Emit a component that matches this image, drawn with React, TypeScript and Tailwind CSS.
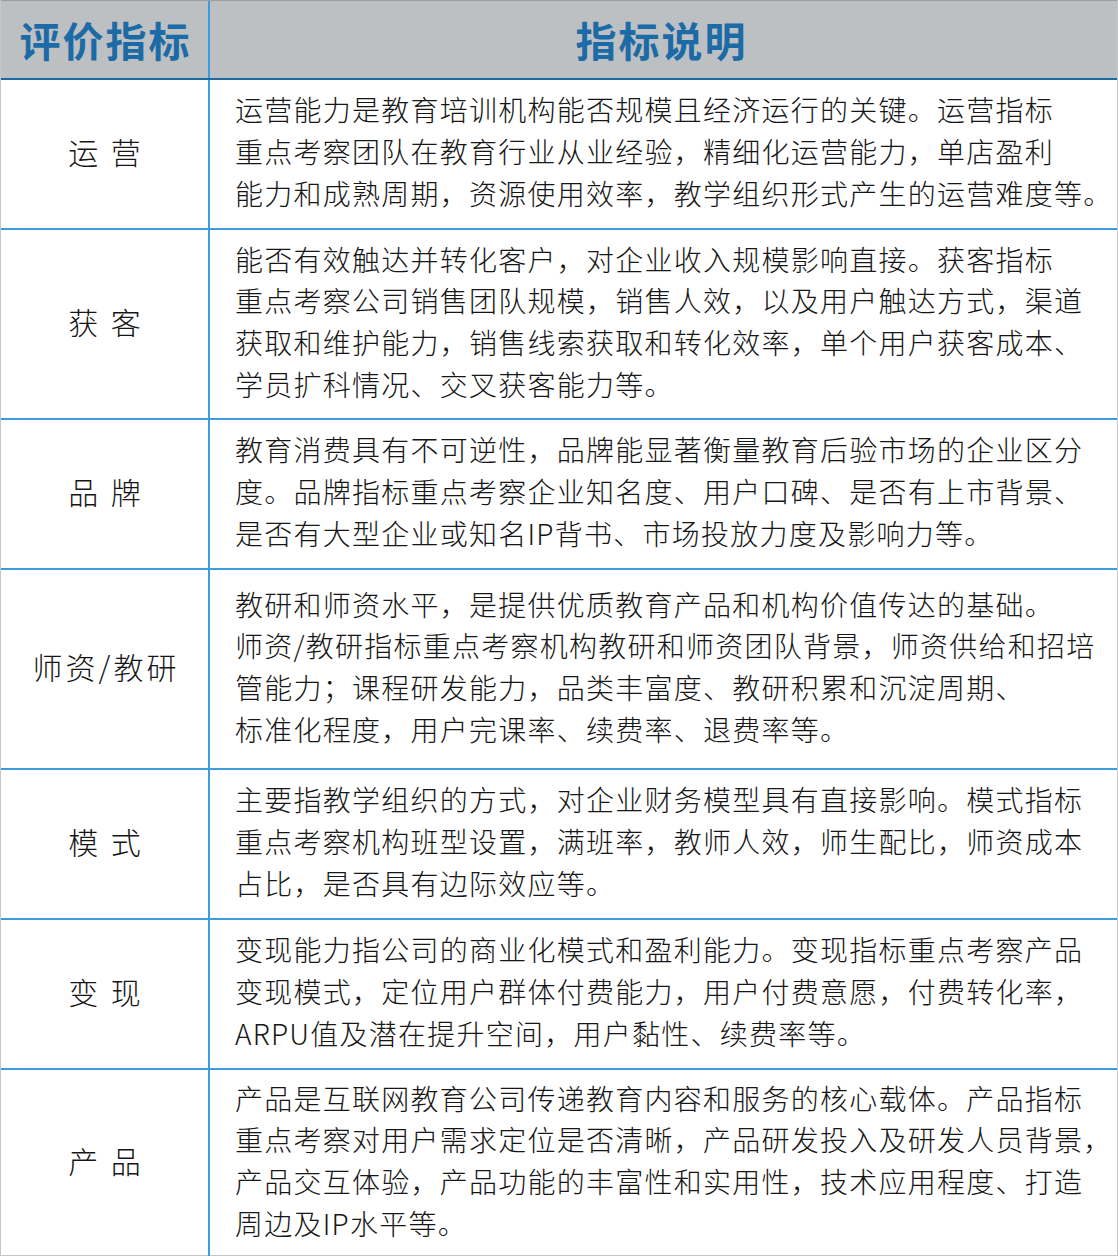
import React from "react";

const rows: { label: string; h: string; lines: string[] }[] = [
  {
    label: "运 营",
    h: "h-[150px]",
    lines: [
      "运营能力是教育培训机构能否规模且经济运行的关键。运营指标",
      "重点考察团队在教育行业从业经验，精细化运营能力，单店盈利",
      "能力和成熟周期，资源使用效率，教学组织形式产生的运营难度等。",
    ],
  },
  {
    label: "获 客",
    h: "h-[190px]",
    lines: [
      "能否有效触达并转化客户，对企业收入规模影响直接。获客指标",
      "重点考察公司销售团队规模，销售人效，以及用户触达方式，渠道",
      "获取和维护能力，销售线索获取和转化效率，单个用户获客成本、",
      "学员扩科情况、交叉获客能力等。",
    ],
  },
  {
    label: "品 牌",
    h: "h-[150px]",
    lines: [
      "教育消费具有不可逆性，品牌能显著衡量教育后验市场的企业区分",
      "度。品牌指标重点考察企业知名度、用户口碑、是否有上市背景、",
      "是否有大型企业或知名IP背书、市场投放力度及影响力等。",
    ],
  },
  {
    label: "师资/教研",
    h: "h-[200px]",
    lines: [
      "教研和师资水平，是提供优质教育产品和机构价值传达的基础。",
      "师资/教研指标重点考察机构教研和师资团队背景，师资供给和招培",
      "管能力；课程研发能力，品类丰富度、教研积累和沉淀周期、",
      "标准化程度，用户完课率、续费率、退费率等。",
    ],
  },
  {
    label: "模 式",
    h: "h-[150px]",
    lines: [
      "主要指教学组织的方式，对企业财务模型具有直接影响。模式指标",
      "重点考察机构班型设置，满班率，教师人效，师生配比，师资成本",
      "占比，是否具有边际效应等。",
    ],
  },
  {
    label: "变 现",
    h: "h-[150px]",
    lines: [
      "变现能力指公司的商业化模式和盈利能力。变现指标重点考察产品",
      "变现模式，定位用户群体付费能力，用户付费意愿，付费转化率，",
      "ARPU值及潜在提升空间，用户黏性、续费率等。",
    ],
  },
  {
    label: "产 品",
    h: "h-[186px]",
    lines: [
      "产品是互联网教育公司传递教育内容和服务的核心载体。产品指标",
      "重点考察对用户需求定位是否清晰，产品研发投入及研发人员背景，",
      "产品交互体验，产品功能的丰富性和实用性，技术应用程度、打造",
      "周边及IP水平等。",
    ],
  },
];

export default function App() {
  return (
    <div
      className="w-[1118px] h-[1256px] bg-white text-[#161616] overflow-hidden"
      style={{ fontFamily: '"Noto Sans CJK SC", "Noto Sans", sans-serif' }}
    >
      <div className="border-l border-r border-b border-[#c6c6c6] h-full flex flex-col">
        <div className="flex h-[80px] bg-[#bdc0c3] border-t border-t-[#9a9ea1] border-b-2 border-b-[#1b69a0] shrink-0">
          <div className="w-[209px] shrink-0 border-r-2 border-[#3d9be0] flex items-center justify-center text-[41px] font-bold text-[#1c6aa6] tracking-[2px] pl-[2px]">
            评价指标
          </div>
          <div className="flex-1 flex items-center justify-center text-[41px] font-bold text-[#1c6aa6] tracking-[2px] pr-[4px]">
            指标说明
          </div>
        </div>
        {rows.map((r, i) => (
          <div
            key={i}
            className={`flex shrink-0 ${r.h} ${i < rows.length - 1 ? "border-b-2 border-[#3d9be0]" : ""}`}
          >
            <div className="w-[209px] shrink-0 border-r-2 border-[#3d9be0] flex items-center justify-center text-[30px] font-light tracking-[3px] pl-[3px] pb-[6px]">
              {r.label}
            </div>
            <div className="flex-1 flex flex-col justify-center pl-[25px] pb-[4px] text-[28px] font-light leading-[41.7px] tracking-[1.25px] whitespace-nowrap">
              {r.lines.map((l, j) => (
                <div key={j}>{l}</div>
              ))}
            </div>
          </div>
        ))}
      </div>
    </div>
  );
}
